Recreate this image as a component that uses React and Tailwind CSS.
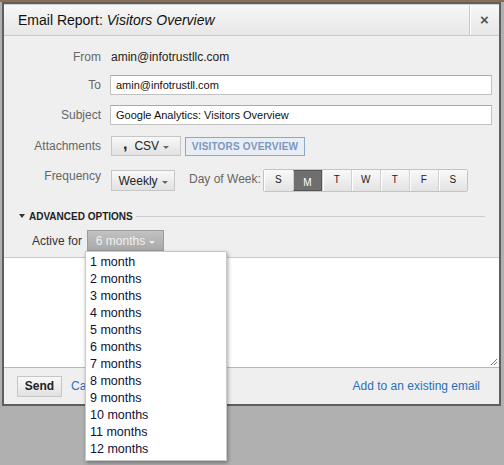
import { useState } from "react";

const days = ["S", "M", "T", "W", "T", "F", "S"];
const months = Array.from({ length: 12 }, (_, i) => `${i + 1} ${i === 0 ? "month" : "months"}`);

const Caret = ({ className = "border-t-[#666]" }) => (
  <span className={`inline-block w-0 h-0 border-l-[3px] border-r-[3px] border-t-[3px] border-l-transparent border-r-transparent ${className} ml-[4px] mt-[3px]`} />
);

const Label = ({ children, className = "" }) => (
  <div className={`w-[97px] shrink-0 text-right text-[12px] text-[#666] ${className}`}>{children}</div>
);

export default function App() {
  const [day, setDay] = useState(1);

  return (
    <div className="relative w-[504px] h-[465px] overflow-hidden bg-[#b0b0b0] font-['Liberation_Sans',Arial,sans-serif]">
      <div className="h-[2px] bg-[#8b6c55]" />

      {/* Dialog */}
      <div className="ml-[2px] w-[499px] border-2 border-[#5f5f5f] bg-[#efefef]">
        {/* Title bar */}
        <div className="flex h-[32px] border-t border-[#cfcfcf] border-b border-b-[#c8c8c8] bg-gradient-to-b from-[#f7f7f7] to-[#e7e7e7]">
          <div className="flex-1 flex items-center pl-[14px] text-[14px] text-[#111]">
            Email Report:&nbsp;<span className="italic">Visitors Overview</span>
          </div>
          <button className="w-[30px] flex items-center justify-center border-l border-l-[#c9c9c9] shadow-[inset_1px_0_0_#fff] text-[#555] text-[15px] font-bold">
            ×
          </button>
        </div>

        {/* Form */}
        <div className="pt-[11px]">
          <div className="flex items-center h-[20px]">
            <Label>From</Label>
            <div className="ml-[10px] text-[12px] text-[#222]">amin@infotrustllc.com</div>
          </div>

          <div className="flex items-center h-[20px] mt-[8px] pr-[7px]">
            <Label>To</Label>
            <input
              defaultValue="amin@infotrustll.com"
              className="ml-[9px] flex-1 h-[20px] bg-white border border-[#c2c2c2] border-t-[#a9a9a9] px-[5px] text-[11px] text-[#111] outline-none"
            />
          </div>

          <div className="flex items-center h-[20px] mt-[10px] pr-[7px]">
            <Label>Subject</Label>
            <input
              defaultValue="Google Analytics: Visitors Overview"
              className="ml-[9px] flex-1 h-[20px] bg-white border border-[#c2c2c2] border-t-[#a9a9a9] px-[5px] text-[11px] text-[#111] outline-none"
            />
          </div>

          <div className="flex items-center h-[20px] mt-[11px]">
            <Label>Attachments</Label>
            <button className="ml-[10px] w-[70px] h-[20px] flex items-center justify-center border border-[#c6c6c6] bg-gradient-to-b from-[#f8f8f8] to-[#e2e2e2] text-[12px] text-[#222]">
              <span className="font-bold text-[16px] leading-none -mt-[4px] mr-[7px]">,</span>
              CSV
              <Caret />
            </button>
            <button className="ml-[4px] w-[120px] h-[19px] border border-[#8ea6c8] bg-[#e9eef6] text-[10px] font-bold text-[#7c97bd] tracking-[0.2px]">
              VISITORS OVERVIEW
            </button>
          </div>

          <div className="flex items-start h-[23px] mt-[13px]">
            <Label className="-mt-[2px]">Frequency</Label>
            <button className="ml-[10px] mt-[1px] w-[64px] h-[21px] flex items-center justify-center border border-[#c6c6c6] bg-gradient-to-b from-[#f8f8f8] to-[#e2e2e2] text-[12px] text-[#222]">
              Weekly
              <Caret />
            </button>
            <div className="ml-[14px] mt-[1px] text-[12px] text-[#666]">Day of Week:</div>
            <div className="ml-[2px] flex h-[23px] border border-[#c4c4c4] rounded-[2px] bg-[#e9e9e9]">
              {days.map((d, i) => (
                <button
                  key={i}
                  onClick={() => setDay(i)}
                  className={`w-[29px] h-full flex items-center justify-center text-[10px] ${
                    i > 0 ? "border-l border-l-[#d0d0d0]" : ""
                  } ${
                    day === i
                      ? "bg-[#6f6f6f] text-white border border-[#555] pt-[4px]"
                      : "bg-gradient-to-b from-[#f9f9f9] to-[#e3e3e3] text-[#222] shadow-[inset_1px_0_0_#fff] pb-[2px]"
                  }`}
                >
                  {d}
                </button>
              ))}
            </div>
          </div>

          <div className="flex items-center h-[12px] mt-[18px] pl-[15px] pr-[14px]">
            <span className="w-0 h-0 border-l-[3px] border-r-[3px] border-t-[4px] border-l-transparent border-r-transparent border-t-[#333]" />
            <span className="ml-[4px] text-[10px] font-bold text-[#222]">ADVANCED OPTIONS</span>
            <div className="ml-[3px] flex-1 h-px bg-[#cdcdcd]" />
          </div>

          <div className="flex items-center h-[21px] mt-[8px] pl-[28px]">
            <span className="text-[12px] text-[#333]">Active for</span>
            <button className="ml-[5px] w-[77px] h-[21px] flex items-center justify-center border border-[#9c9c9c] bg-gradient-to-b from-[#c2c2c2] to-[#a9a9a9] text-[12px] text-[#f1f1f1]">
              6 months
              <Caret className="border-t-[#eee]" />
            </button>
          </div>
        </div>

        {/* Message area */}
        <div className="mt-[6px] relative h-[111px] bg-white border-t border-t-[#c9c9c9] border-b border-b-[#b9b9b9]">
          <svg className="absolute right-[1px] bottom-[1px]" width="8" height="8" viewBox="0 0 8 8">
            <path d="M7 1 L1 7 M7 4 L4 7" stroke="#777" strokeWidth="1" />
          </svg>
        </div>

        {/* Footer */}
        <div className="flex items-center h-[36px] pl-[13px] pr-[19px]">
          <button className="w-[45px] h-[21px] border border-[#c6c6c6] bg-gradient-to-b from-[#f8f8f8] to-[#e2e2e2] text-[12px] font-bold text-[#222]">
            Send
          </button>
          <span className="ml-[9px] text-[12px] text-[#2a6fb9]">Cancel</span>
          <span className="ml-auto text-[12px] text-[#2a6fb9]">Add to an existing email</span>
        </div>
      </div>

      {/* Dropdown menu */}
      <div className="absolute left-[85px] top-[251px] w-[142px] h-[210px] bg-white border border-[#c8c8c8] shadow-[1px_2px_4px_rgba(0,0,0,0.35)] pt-[2px]">
        {months.map((m) => (
          <div key={m} className="h-[17px] flex items-center pl-[4px] text-[12.5px] text-[#111133]">
            {m}
          </div>
        ))}
      </div>
    </div>
  );
}
